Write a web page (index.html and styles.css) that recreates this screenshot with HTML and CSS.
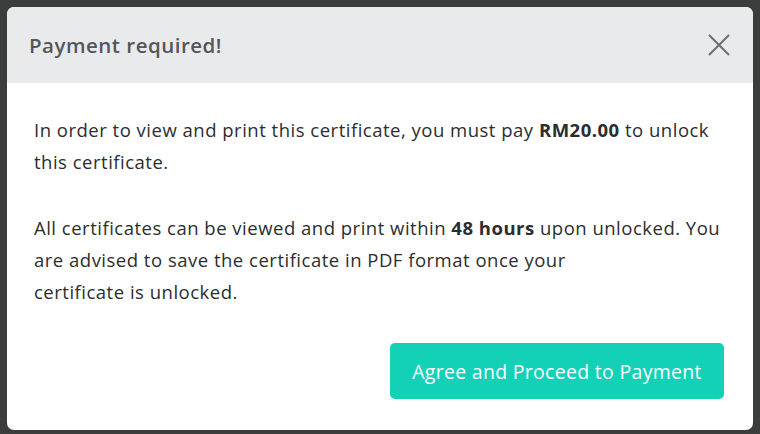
FILE: index.html
```html
<!DOCTYPE html>
<html lang="en">
<head>
    <meta charset="UTF-8">
    <meta name="viewport" content="width=device-width, initial-scale=1.0">
    <title>Payment required</title>
    <link rel="stylesheet" href="styles.css">
</head>
<body>

    <div class="modal">
        <div class="modal-header">
            <h2>Payment required!</h2>
            <button class="close-btn" aria-label="Close">
                <svg width="22" height="22" viewBox="0 0 22 22">
                    <path d="M1 1 L21 21 M21 1 L1 21" stroke="#6b6d70" stroke-width="2" fill="none"/>
                </svg>
            </button>
        </div>

        <div class="modal-body">
            <p>In order to view and print this certificate, you must pay <b>RM20.00</b> to unlock<br>this certificate.</p>
            <p>All certificates can be viewed and print within <b>48 hours</b> upon unlocked. You<br>are advised to save the certificate in PDF format once your<br>certificate is unlocked.</p>
        </div>

        <div class="modal-footer">
            <button class="pay-btn">Agree and Proceed to Payment</button>
        </div>
    </div>

</body>
</html>
```

FILE: styles.css
```css
html, body {
    margin: 0;
    height: 100%;
}
body {
    font-family: "Open Sans", "Noto Sans", sans-serif;
    background-color: #3b3d3c;
    padding: 7px 7px 0 7px;
    box-sizing: border-box;
}
.modal {
    background-color: #fff;
    border-radius: 7px;
    overflow: hidden;
    height: 423px;
    display: flex;
    flex-direction: column;
}
.modal-header {
    background-color: #e9eaec;
    height: 76px;
    flex-shrink: 0;
    display: flex;
    align-items: center;
    justify-content: space-between;
    padding: 0 23px 0 22px;
}
.modal-header h2 {
    margin: 0;
    font-size: 20.5px;
    font-weight: 600;
    letter-spacing: 0.5px;
    color: #54565a;
}
.close-btn {
    background: none;
    border: none;
    padding: 0;
    width: 22px;
    height: 22px;
    cursor: pointer;
}
.modal-body {
    padding: 31px 20px 0 27px;
    flex-grow: 1;
}
.modal-body p {
    margin: 0 0 35px 0;
    font-size: 18.5px;
    letter-spacing: 0.5px;
    line-height: 32px;
    white-space: nowrap;
    color: #2b2d30;
}
.modal-body p + p {
    margin-top: -1px;
}
.modal-body b {
    font-weight: 700;
}
.modal-footer {
    display: flex;
    justify-content: flex-end;
    padding: 0 29px 31px 0;
}
.pay-btn {
    font-family: inherit;
    background-color: #13d1b7;
    color: #fff;
    border: none;
    border-radius: 5px;
    width: 334px;
    height: 56px;
    font-size: 19.5px;
    letter-spacing: 0.3px;
    font-weight: 500;
    cursor: pointer;
}
```
